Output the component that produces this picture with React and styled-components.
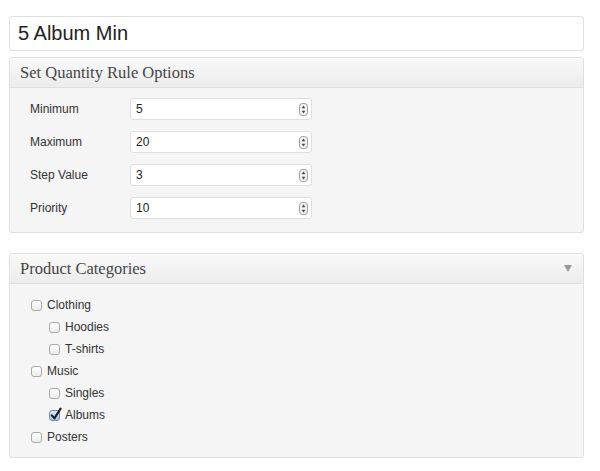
import React from "react";
import styled, { createGlobalStyle } from "styled-components";

const GlobalStyle = createGlobalStyle`
  html, body {
    margin: 0;
    padding: 0;
    background: #fff;
  }
  body {
    font-family: "Liberation Sans", Arial, sans-serif;
    color: #333;
  }
`;

const Page = styled.div`
  width: 575px;
  padding: 16px 16px 0 9px;
  display: flex;
  flex-direction: column;
`;

const TitleInput = styled.div`
  height: 33px;
  border: 1px solid #dfdfdf;
  border-radius: 3px;
  background: #fff;
  display: flex;
  align-items: center;
  padding-left: 8px;
  font-size: 20px;
  color: #222;
`;

const Panel = styled.div`
  margin-top: ${(props) => props.gap}px;
  border: 1px solid #dfdfdf;
  border-radius: 3px;
  background: #f5f5f5;
  box-shadow: inset 0 1px 0 #fff;
`;

const PanelHeader = styled.div`
  height: 29px;
  display: flex;
  align-items: center;
  justify-content: space-between;
  padding: 0 11px 0 10px;
  border-bottom: 1px solid #dfdfdf;
  background: linear-gradient(to bottom, #f9f9f9, #ececec);
  border-radius: 3px 3px 0 0;
`;

const HeaderTitle = styled.h3`
  margin: 0;
  font-family: Georgia, "Liberation Serif", serif;
  font-weight: normal;
  font-size: 16.5px;
  color: #464646;
`;

const Toggle = styled.span`
  width: 0;
  height: 0;
  border-left: 4px solid transparent;
  border-right: 4px solid transparent;
  border-top: 7px solid #999;
`;

const OptionsBody = styled.div`
  display: grid;
  grid-template-columns: 100px 182px;
  row-gap: 11px;
  align-items: center;
  padding: 10px 0 13px 20px;
`;

const Label = styled.label`
  font-size: 12px;
  color: #333;
`;

const NumberField = styled.div`
  height: 20px;
  border: 1px solid #dfdfdf;
  border-radius: 3px;
  background: #fff;
  display: flex;
  align-items: center;
  justify-content: space-between;
  padding: 0 3px 0 5px;
  font-size: 12px;
  color: #222;
`;

const Spinner = () => (
  <svg width="9" height="13" viewBox="0 0 9 13">
    <rect x="0.5" y="0.5" width="8" height="12" rx="3" fill="#f4f4f4" stroke="#9a9a9a" />
    <path d="M4.5 2.6 L6.3 5.2 H2.7 Z" fill="#444" />
    <path d="M4.5 10.4 L6.3 7.8 H2.7 Z" fill="#444" />
  </svg>
);

const CategoryList = styled.ul`
  list-style: none;
  margin: 0;
  padding: 10px 0 9px 21px;
`;

const SubList = styled.ul`
  list-style: none;
  margin: 0;
  padding: 0 0 0 18px;
`;

const CategoryRow = styled.label`
  height: 22px;
  display: flex;
  align-items: center;
  gap: 5px;
  font-size: 12px;
  color: #333;
`;

const Box = styled.span`
  box-sizing: border-box;
  width: 11px;
  height: 11px;
  border: 1px solid ${(props) => (props.checked ? "#6f8fb8" : "#a9a9a9")};
  border-radius: 3px;
  background: ${(props) =>
    props.checked
      ? "linear-gradient(to bottom, #dce8f7, #a9c6ec)"
      : "linear-gradient(to bottom, #ffffff, #ececec)"};
  position: relative;
  flex-shrink: 0;
`;

const Tick = styled.svg`
  position: absolute;
  left: 0px;
  top: -4px;
`;

const Checkbox = ({ checked }) => (
  <Box checked={checked}>
    {checked && (
      <Tick width="12" height="14" viewBox="0 0 12 14">
        <path
          d="M1.8 8.4 L4.4 11.4 L10.6 1.6"
          fill="none"
          stroke="#1d1d1d"
          strokeWidth="2.1"
          strokeLinecap="round"
          strokeLinejoin="round"
        />
      </Tick>
    )}
  </Box>
);

const fields = [
  { label: "Minimum", value: "5" },
  { label: "Maximum", value: "20" },
  { label: "Step Value", value: "3" },
  { label: "Priority", value: "10" },
];

const categories = [
  { name: "Clothing", children: [{ name: "Hoodies" }, { name: "T-shirts" }] },
  {
    name: "Music",
    children: [{ name: "Singles" }, { name: "Albums", checked: true }],
  },
  { name: "Posters" },
];

const Category = ({ item }) => (
  <li>
    <CategoryRow>
      <Checkbox checked={item.checked} />
      {item.name}
    </CategoryRow>
    {item.children && (
      <SubList>
        {item.children.map((child) => (
          <Category key={child.name} item={child} />
        ))}
      </SubList>
    )}
  </li>
);

const App = () => (
  <>
    <GlobalStyle />
    <Page>
      <TitleInput>5 Album Min</TitleInput>
      <Panel gap={6}>
        <PanelHeader>
          <HeaderTitle>Set Quantity Rule Options</HeaderTitle>
        </PanelHeader>
        <OptionsBody>
          {fields.map((field) => (
            <React.Fragment key={field.label}>
              <Label>{field.label}</Label>
              <NumberField>
                {field.value}
                <Spinner />
              </NumberField>
            </React.Fragment>
          ))}
        </OptionsBody>
      </Panel>
      <Panel gap={20}>
        <PanelHeader>
          <HeaderTitle>Product Categories</HeaderTitle>
          <Toggle />
        </PanelHeader>
        <CategoryList>
          {categories.map((item) => (
            <Category key={item.name} item={item} />
          ))}
        </CategoryList>
      </Panel>
    </Page>
  </>
);

export default App;
